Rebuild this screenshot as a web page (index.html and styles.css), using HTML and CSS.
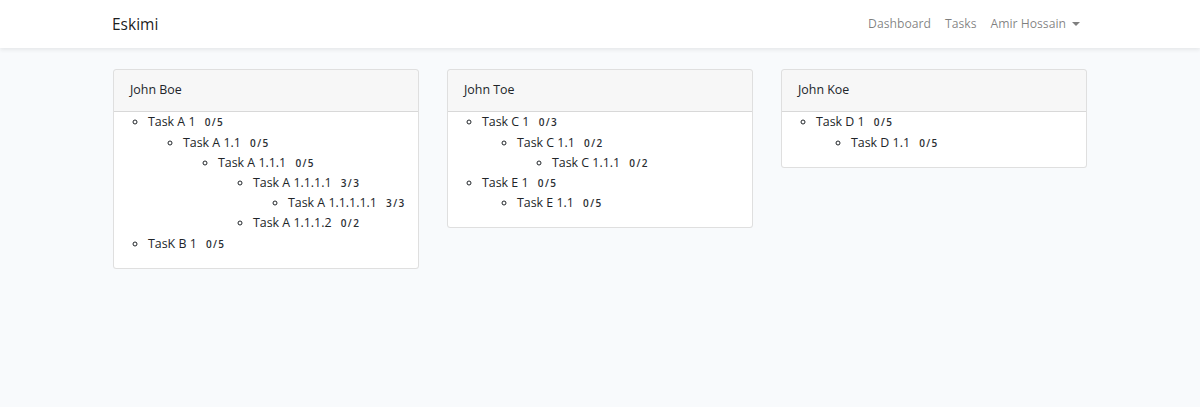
FILE: index.html
```html
<!DOCTYPE html>
<html lang="en">
<head>
<meta charset="utf-8">
<title>Eskimi</title>
<link rel="stylesheet" href="styles.css">
</head>
<body>
<nav class="navbar">
  <div class="container nav-inner">
    <a class="brand" href="#">Eskimi</a>
    <ul class="nav-links">
      <li><a class="nav-link" href="#">Dashboard</a></li>
      <li><a class="nav-link" href="#">Tasks</a></li>
      <li><a class="nav-link dropdown" href="#">Amir Hossain</a></li>
    </ul>
  </div>
</nav>
<main class="main">
  <div class="container row">
    <div class="card">
      <div class="card-header">John Boe</div>
      <ul class="tree">
        <li>Task A 1 <span class="badge">0/5</span>
          <ul>
            <li>Task A 1.1 <span class="badge">0/5</span>
              <ul>
                <li>Task A 1.1.1 <span class="badge">0/5</span>
                  <ul>
                    <li>Task A 1.1.1.1 <span class="badge">3/3</span>
                      <ul>
                        <li>Task A 1.1.1.1.1 <span class="badge">3/3</span></li>
                      </ul>
                    </li>
                    <li>Task A 1.1.1.2 <span class="badge">0/2</span></li>
                  </ul>
                </li>
              </ul>
            </li>
          </ul>
        </li>
        <li>TasK B 1 <span class="badge">0/5</span></li>
      </ul>
    </div>
    <div class="card">
      <div class="card-header">John Toe</div>
      <ul class="tree">
        <li>Task C 1 <span class="badge">0/3</span>
          <ul>
            <li>Task C 1.1 <span class="badge">0/2</span>
              <ul>
                <li>Task C 1.1.1 <span class="badge">0/2</span></li>
              </ul>
            </li>
          </ul>
        </li>
        <li>Task E 1 <span class="badge">0/5</span>
          <ul>
            <li>Task E 1.1 <span class="badge">0/5</span></li>
          </ul>
        </li>
      </ul>
    </div>
    <div class="card">
      <div class="card-header">John Koe</div>
      <ul class="tree">
        <li>Task D 1 <span class="badge">0/5</span>
          <ul>
            <li>Task D 1.1 <span class="badge">0/5</span></li>
          </ul>
        </li>
      </ul>
    </div>
  </div>
</main>
</body>
</html>
```
FILE: styles.css
```css
* { box-sizing: border-box; }
html, body { margin: 0; padding: 0; }
body {
  background: #f8fafc;
  color: #212529;
  font-family: "Open Sans", "Noto Sans", sans-serif;
  font-size: 12.4px;
  line-height: 20.2px;
  min-height: 407px;
}
.container {
  width: 974px;
  margin: 0 auto;
}
.navbar {
  background: #fff;
  box-shadow: 0 2px 4px rgba(0,0,0,.075);
  padding: 7px 0;
  position: relative;
}
.nav-inner {
  display: flex;
  align-items: center;
  justify-content: space-between;
}
.brand {
  color: rgba(0,0,0,.9);
  text-decoration: none;
  font-size: 15.5px;
  padding: 4.4px 0;
  line-height: 25px;
  margin-left: -1px;
}
.nav-links {
  list-style: none;
  margin: 0;
  padding: 0;
  display: flex;
}
.nav-link {
  display: block;
  padding: 7px 7px;
  color: rgba(0,0,0,.5);
  text-decoration: none;
  font-size: 12.2px;
}
.dropdown::after {
  content: "";
  display: inline-block;
  margin-left: 6px;
  vertical-align: 2.5px;
  border-top: 4.5px solid;
  border-left: 4.5px solid transparent;
  border-right: 4.5px solid transparent;
}
.main {
  padding: 21px 0;
}
.row {
  display: flex;
  align-items: flex-start;
  gap: 28px;
}
.card {
  width: 306px;
  background: #fff;
  border: 1px solid rgba(0,0,0,.125);
  border-radius: 3.5px;
}
.card-header {
  background: rgba(0,0,0,.03);
  border-bottom: 1px solid rgba(0,0,0,.125);
  padding: 10px 16px 11px;
  border-radius: 3px 3px 0 0;
}
.tree {
  margin: 0 0 14px;
  padding-left: 34px;
  list-style: circle;
}
.tree ul {
  margin: 0;
  padding-left: 35px;
  list-style: circle;
}
.badge {
  display: inline-block;
  font-size: 10px;
  font-weight: 600;
  line-height: 1;
  padding: 2.5px 5px 2.5px 6px;
  letter-spacing: 1.4px;
  vertical-align: baseline;
  color: #2a2e33;
}
```
